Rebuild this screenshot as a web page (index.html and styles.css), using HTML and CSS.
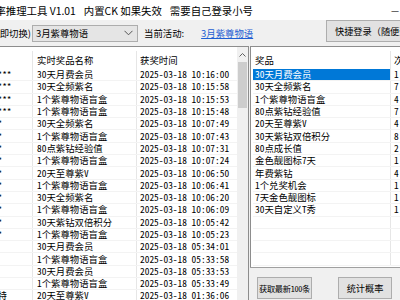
FILE: index.html
```html
<!DOCTYPE html>
<html lang="zh-CN">
<head>
    <meta charset="UTF-8">
    <meta name="viewport" content="width=device-width, initial-scale=1.0">
    <title>概率推理工具</title>
    <link rel="stylesheet" href="styles.css">
</head>
<body>
    <div class="window">
        <div class="titlebar">
            <span class="title">概率推理工具 V1.01</span>
            <span class="title note">内置CK 如果失效</span>
            <span class="title note">需要自己登录小号</span>
            <div class="controls">
                <span class="ctl">—</span>
                <span class="ctl">☐</span>
                <span class="ctl">✕</span>
            </div>
        </div>

        <div class="toolbar">
            <div class="hint"><span>活动(立即切换)</span></div>
            <div class="combo">
                <span>3月紫尊物语</span>
                <svg width="9" height="6" viewBox="0 0 9 6"><path d="M0.5 0.8 L4.5 4.8 L8.5 0.8" fill="none" stroke="#555" stroke-width="1"/></svg>
            </div>
            <span class="cur">当前活动:</span>
            <a class="link">3月紫尊物语</a>
            <button class="btn quick">快捷登录（随便登录一个小号）</button>
        </div>

        <div class="main">
            <div class="records">
                <div class="grid">
                    <div class="row head"><div class="c user">用户</div><div class="c prize">实时奖品名称</div><div class="c time">获奖时间</div></div>
                    <div class="row"><div class="c user">1234****</div><div class="c prize">30天月费会员</div><div class="c time">2025-03-18 10:16:00</div></div>
                    <div class="row"><div class="c user">5678****</div><div class="c prize">30天全频紫名</div><div class="c time">2025-03-18 10:15:58</div></div>
                    <div class="row"><div class="c user">9012****</div><div class="c prize">1个紫尊物语盲盒</div><div class="c time">2025-03-18 10:15:53</div></div>
                    <div class="row"><div class="c user">3456****</div><div class="c prize">1个紫尊物语盲盒</div><div class="c time">2025-03-18 10:15:48</div></div>
                    <div class="row"><div class="c user">51****</div><div class="c prize">30天全频紫名</div><div class="c time">2025-03-18 10:07:49</div></div>
                    <div class="row"><div class="c user">51****</div><div class="c prize">1个紫尊物语盲盒</div><div class="c time">2025-03-18 10:07:43</div></div>
                    <div class="row"><div class="c user">51****</div><div class="c prize">80点紫钻经验值</div><div class="c time">2025-03-18 10:07:31</div></div>
                    <div class="row"><div class="c user">51****</div><div class="c prize">1个紫尊物语盲盒</div><div class="c time">2025-03-18 10:07:24</div></div>
                    <div class="row"><div class="c user">51****</div><div class="c prize">20天至尊紫V</div><div class="c time">2025-03-18 10:06:50</div></div>
                    <div class="row"><div class="c user">51****</div><div class="c prize">1个紫尊物语盲盒</div><div class="c time">2025-03-18 10:06:41</div></div>
                    <div class="row"><div class="c user">51****</div><div class="c prize">30天全频紫名</div><div class="c time">2025-03-18 10:06:20</div></div>
                    <div class="row"><div class="c user">51****</div><div class="c prize">1个紫尊物语盲盒</div><div class="c time">2025-03-18 10:06:09</div></div>
                    <div class="row"><div class="c user">51****</div><div class="c prize">30天紫钻双倍积分</div><div class="c time">2025-03-18 10:05:42</div></div>
                    <div class="row"><div class="c user">51****</div><div class="c prize">1个紫尊物语盲盒</div><div class="c time">2025-03-18 10:05:23</div></div>
                    <div class="row"><div class="c user">12***</div><div class="c prize">30天月费会员</div><div class="c time">2025-03-18 05:34:01</div></div>
                    <div class="row"><div class="c user">12***</div><div class="c prize">1个紫尊物语盲盒</div><div class="c time">2025-03-18 05:33:58</div></div>
                    <div class="row"><div class="c user">12***</div><div class="c prize">30天月费会员</div><div class="c time">2025-03-18 05:33:53</div></div>
                    <div class="row"><div class="c user">12***</div><div class="c prize">1个紫尊物语盲盒</div><div class="c time">2025-03-18 05:33:49</div></div>
                    <div class="row"><div class="c user">12345特</div><div class="c prize">20天至尊紫V</div><div class="c time">2025-03-18 01:36:06</div></div>
                </div>
                <div class="scrollbar">
                    <div class="arrow"><svg width="7" height="4" viewBox="0 0 7 4"><path d="M0.5 3.5 L3.5 0.5 L6.5 3.5" fill="none" stroke="#606060" stroke-width="1"/></svg></div>
                    <div class="thumb"></div>
                </div>
            </div>

            <div class="side">
                <div class="list">
                    <div class="row head"><div class="c name">奖品</div><div class="c count">次数</div></div>
                    <div class="row selected"><div class="c name">30天月费会员</div><div class="c count">1</div></div>
                    <div class="row"><div class="c name">30天全频紫名</div><div class="c count">7</div></div>
                    <div class="row"><div class="c name">1个紫尊物语盲盒</div><div class="c count">4</div></div>
                    <div class="row"><div class="c name">80点紫钻经验值</div><div class="c count">7</div></div>
                    <div class="row"><div class="c name">20天至尊紫V</div><div class="c count">4</div></div>
                    <div class="row"><div class="c name">30天紫钻双倍积分</div><div class="c count">8</div></div>
                    <div class="row"><div class="c name">80点成长值</div><div class="c count">2</div></div>
                    <div class="row"><div class="c name">金色靓图标7天</div><div class="c count">1</div></div>
                    <div class="row"><div class="c name">年费紫钻</div><div class="c count">4</div></div>
                    <div class="row"><div class="c name">1个兑奖机会</div><div class="c count">1</div></div>
                    <div class="row"><div class="c name">7天金色靓图标</div><div class="c count">1</div></div>
                    <div class="row"><div class="c name">30天自定义T秀</div><div class="c count">1</div></div>
                    <div class="row"><div class="c name"></div><div class="c count"></div></div>
                    <div class="row"><div class="c name"></div><div class="c count"></div></div>
                    <div class="row"><div class="c name"></div><div class="c count"></div></div>
                    <div class="row"><div class="c name"></div><div class="c count"></div></div>
                </div>
                <div class="actions">
                    <button class="btn fetch">获取最新100条</button>
                    <button class="btn stats">统计概率</button>
                </div>
            </div>
        </div>
    </div>
</body>
</html>
```

FILE: styles.css
```css
html, body {
    margin: 0;
    padding: 0;
}

body {
    width: 400px;
    height: 300px;
    overflow: hidden;
    background-color: #f0f0f0;
    font-family: "Noto Sans CJK SC", sans-serif;
    color: #000;
}

/* window is wider than the shot, left edge is cut off */
.window {
    margin-left: -30px;
    width: 500px;
    height: 300px;
    display: flex;
    flex-direction: column;
}

.titlebar {
    height: 20px;
    background-color: #fff;
    display: flex;
    align-items: center;
    padding-left: 15px;
    font-size: 10.4px;
    white-space: nowrap;
}

.titlebar .note {
    margin-left: 8px;
}

.titlebar .controls {
    margin-left: auto;
    display: flex;
}

.titlebar .ctl {
    width: 30px;
    text-align: center;
    font-size: 9px;
}

.toolbar {
    height: 26px;
    display: flex;
    align-items: center;
    font-size: 9.4px;
    white-space: nowrap;
}

.toolbar .hint {
    width: 61px;
    display: flex;
    justify-content: flex-end;
    overflow: hidden;
}

.toolbar .combo {
    box-sizing: border-box;
    width: 106px;
    height: 17px;
    margin-left: 1px;
    border: 1px solid #adadad;
    background-color: #e5e5e5;
    display: flex;
    align-items: center;
    padding: 0 4px 0 3px;
}

.toolbar .combo svg {
    margin-left: auto;
}

.toolbar .cur {
    margin-left: 6px;
}

.toolbar .link {
    margin-left: 17px;
    color: #1f5fd3;
    text-decoration: underline;
}

.btn {
    box-sizing: border-box;
    height: 22px;
    padding: 0;
    border: 1px solid #adadad;
    background-color: #e1e1e1;
    font-family: "Noto Sans CJK SC", sans-serif;
    font-size: 9.2px;
    color: #000;
    white-space: nowrap;
    overflow: hidden;
}

.toolbar .quick {
    align-self: flex-start;
    width: 136px;
    margin-left: auto;
    margin-right: 8px;
    text-align: left;
    padding-left: 8px;
}

.main {
    flex: 1;
    display: flex;
    min-height: 0;
}

.records {
    width: 279px;
    box-sizing: border-box;
    display: flex;
    background-color: #fff;
    border-top: 1px solid #8d8d8d;
    border-right: 1px solid #8d8d8d;
}

.grid {
    flex: 1;
    overflow: hidden;
}

.row {
    box-sizing: border-box;
    height: 12.3px;
    display: flex;
    font-family: "Noto Sans Mono CJK SC", "Noto Sans CJK SC", monospace;
    font-size: 9.4px;
    line-height: 11px;
    white-space: nowrap;
    border-bottom: 1px solid #f3f3f3;
}

.row.head {
    height: 22px;
    align-items: center;
    padding-top: 4px;
    border-bottom: none;
}

.c {
    box-sizing: border-box;
    height: 100%;
    display: flex;
    align-items: center;
    overflow: hidden;
}

.user {
    width: 63px;
    padding-left: 4px;
    border-right: 1px solid #e6e6e6;
}

.prize {
    width: 104px;
    padding-left: 4px;
    border-right: 1px solid #e6e6e6;
}

.time {
    width: 100px;
    padding-left: 3px;
}

.scrollbar {
    width: 11px;
    background-color: #f0f0f0;
    display: flex;
    flex-direction: column;
    align-items: center;
}

.scrollbar .arrow {
    height: 15px;
    display: flex;
    align-items: center;
    justify-content: center;
}

.scrollbar .thumb {
    width: 9px;
    height: 46px;
    background-color: #cdcdcd;
}

.side {
    flex: 1;
    margin-left: 1px;
    display: flex;
    flex-direction: column;
}

.list {
    box-sizing: border-box;
    height: 221px;
    padding-left: 2px;
    background-color: #fff;
    border-top: 1px solid #8d8d8d;
    border-left: 1px solid #8d8d8d;
    overflow: hidden;
}

.name {
    width: 137px;
    padding-left: 2px;
}

.count {
    flex: 1;
    padding-left: 3px;
    border-left: 1px solid #e6e6e6;
}

.row.selected .name {
    background-color: #0078d7;
    color: #fff;
}

.actions {
    flex: 1;
    display: flex;
    align-items: flex-start;
    padding: 9px 0 0 7px;
    border-top: 1px solid #a0a0a0;
}

.actions .fetch {
    width: 55px;
    font-family: "Noto Sans Mono CJK SC", "Noto Sans CJK SC", monospace;
    font-size: 8.2px;
    letter-spacing: -0.3px;
    text-align: center;
}

.actions .stats {
    width: 54px;
    margin-left: 26px;
}
```
